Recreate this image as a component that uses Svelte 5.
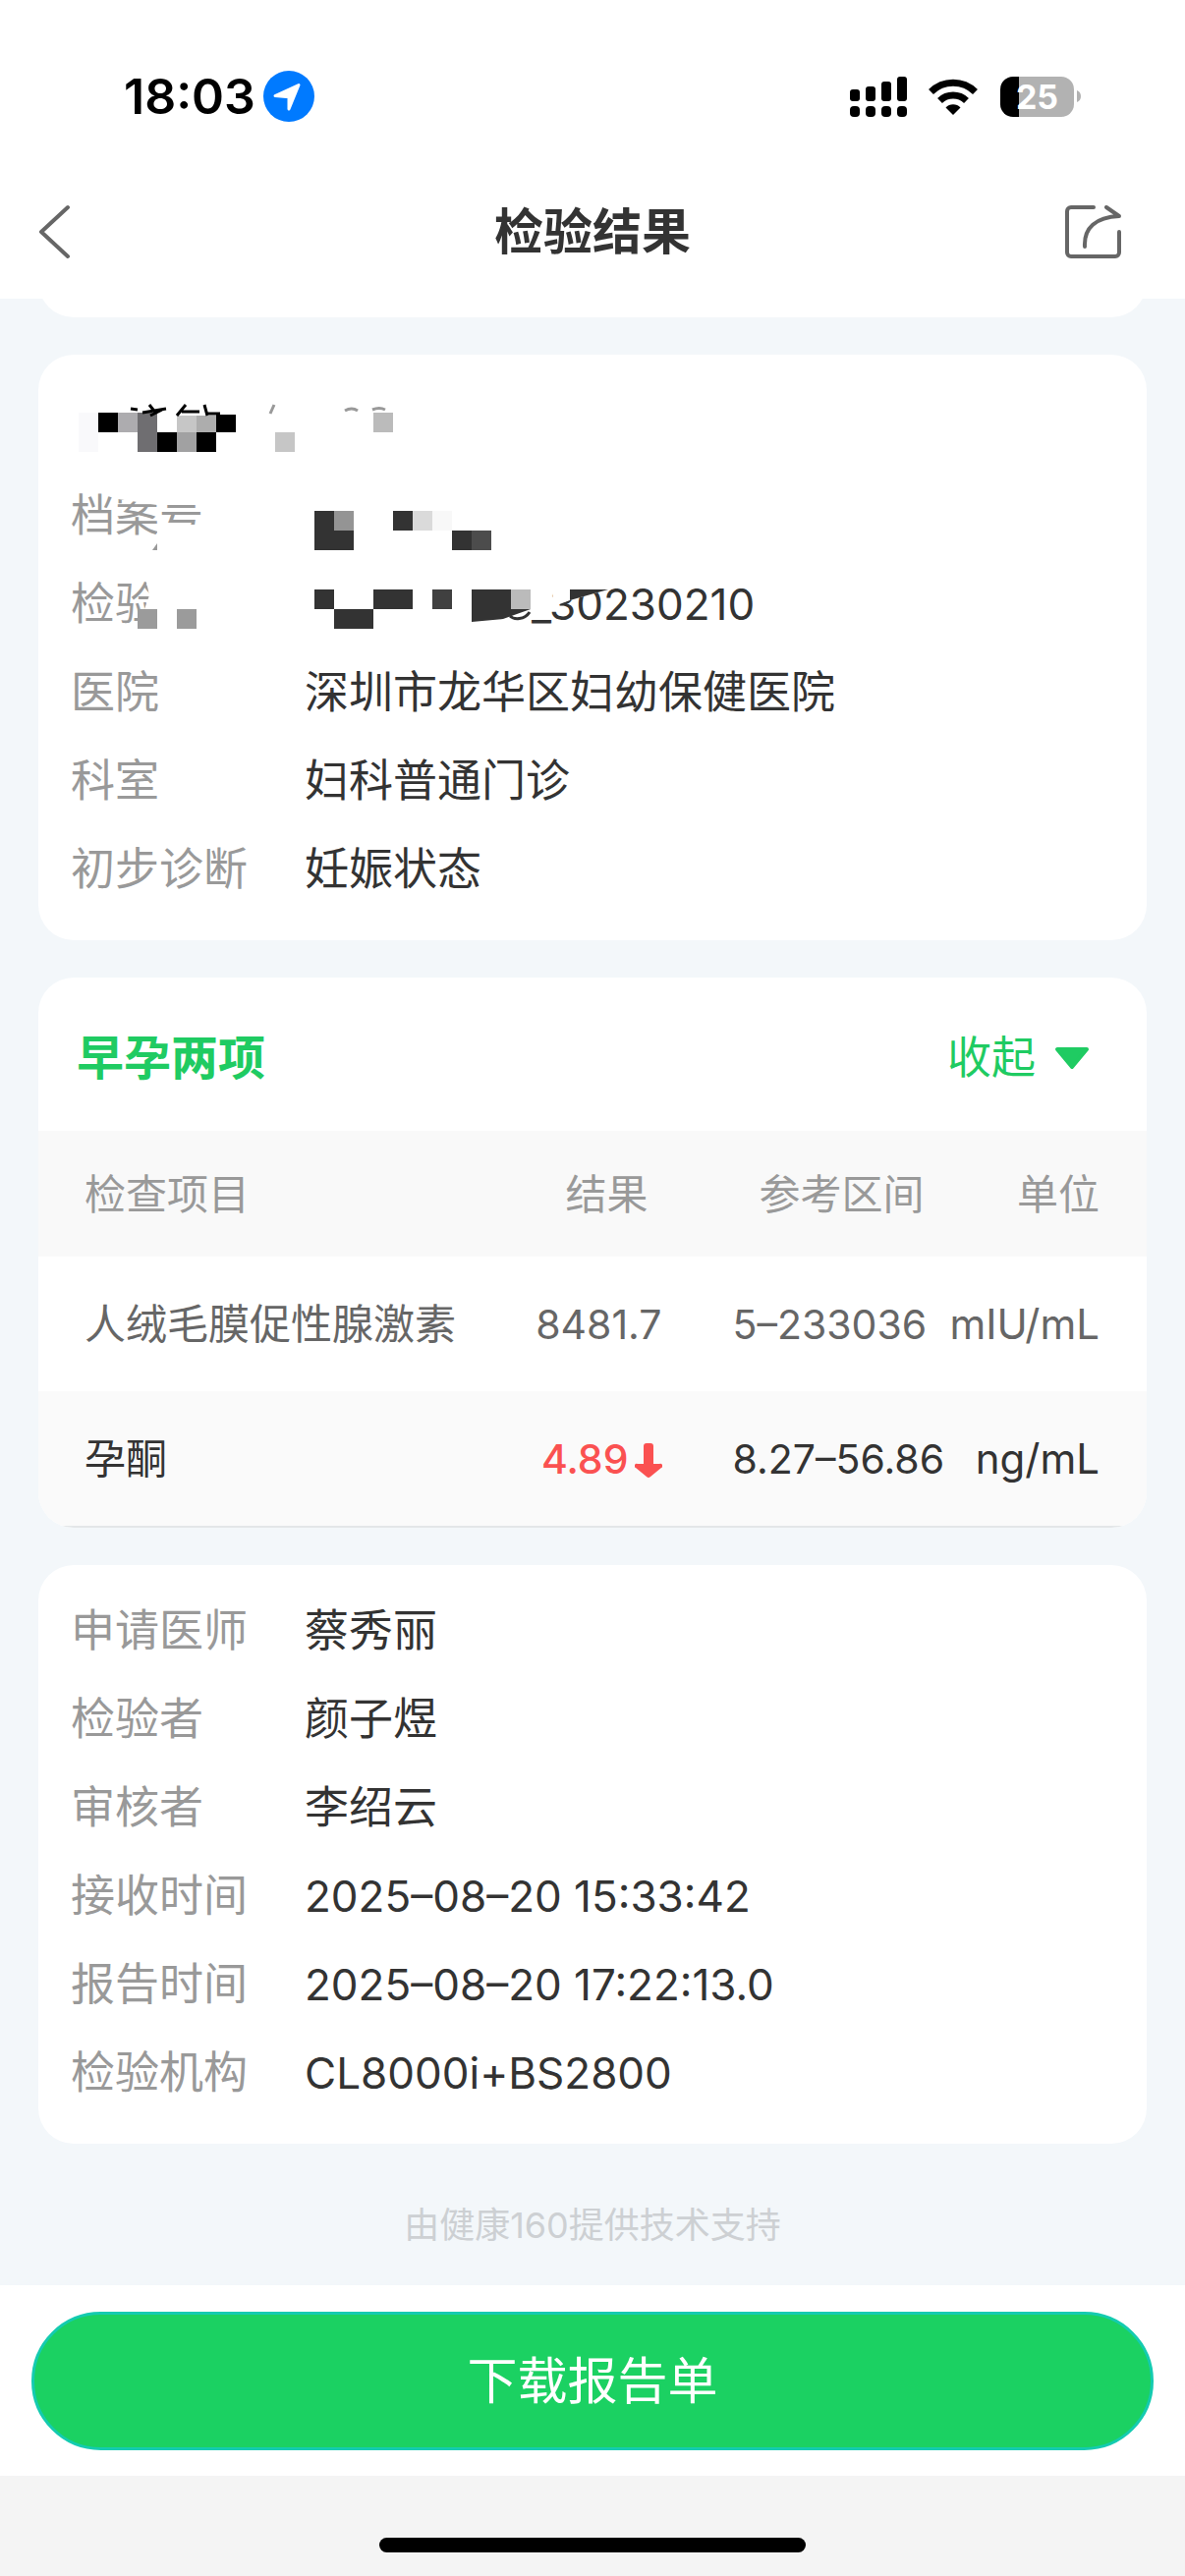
<script>
    const patient = [
        { label: '医院', value: '深圳市龙华区妇幼保健医院' },
        { label: '科室', value: '妇科普通门诊' },
        { label: '初步诊断', value: '妊娠状态' }
    ];

    const results = [
        { name: '人绒毛膜促性腺激素', value: '8481.7', range: '5–233036', unit: 'mIU/mL', low: false },
        { name: '孕酮', value: '4.89', range: '8.27–56.86', unit: 'ng/mL', low: true }
    ];

    const report = [
        { label: '申请医师', value: '蔡秀丽' },
        { label: '检验者', value: '颜子煜' },
        { label: '审核者', value: '李绍云' },
        { label: '接收时间', value: '2025–08–20 15:33:42', latin: true },
        { label: '报告时间', value: '2025–08–20 17:22:13.0', latin: true },
        { label: '检验机构', value: 'CL8000i+BS2800', latin: true }
    ];

    // mosaic tiles over the private fields: x, y, w, h, fill
    const tiles = [
        [80, 420, 20, 40, '#f9f9fb'],
        [100, 420, 20, 20, '#000'],
        [120, 420, 20, 20, '#adacaf'],
        [140, 420, 20, 40, '#6f6e71'],
        [180, 423, 20, 17, '#c6c6c6'],
        [200, 423, 20, 17, '#adadad'],
        [220, 422, 20, 18, '#000'],
        [160, 440, 20, 20, '#000'],
        [180, 440, 20, 20, '#a1a1a2'],
        [200, 440, 20, 20, '#000'],
        [280, 440, 20, 20, '#c6c6c6'],
        [380, 420, 20, 20, '#bbb'],
        [320, 520, 20, 20, '#333'],
        [340, 520, 20, 20, '#949494'],
        [320, 540, 40, 20, '#333'],
        [400, 520, 20, 20, '#333'],
        [420, 520, 20, 20, '#dadada'],
        [440, 520, 20, 20, '#f8f8f8'],
        [460, 540, 20, 20, '#333'],
        [480, 540, 20, 20, '#4c4c4c'],
        [140, 620, 20, 20, '#9b9b9b'],
        [180, 620, 20, 20, '#9b9b9b'],
        [320, 600, 20, 20, '#333'],
        [340, 620, 40, 20, '#333'],
        [380, 600, 40, 20, '#333'],
        [440, 600, 20, 20, '#404040'],
        [520, 600, 20, 20, '#bbb']
    ];

    let open = $state(true);
</script>

<div class="page">
    <div class="status">
        <span class="time">18:03</span>
        <svg class="location" viewBox="0 0 52 52" aria-hidden="true">
            <circle cx="26" cy="26" r="26" fill="#007aff" />
            <path d="M12 25.5 36 14.5 26 39V26.800Z" fill="#fff" stroke="#fff" stroke-width="3" stroke-linejoin="round" />
        </svg>
        <span class="spacer"></span>
        <svg class="signal" viewBox="0 0 58 41" aria-hidden="true">
            <rect x="0" y="13" width="10" height="12" rx="3" />
            <rect x="16" y="10" width="10" height="15" rx="3" />
            <rect x="32" y="5" width="10" height="20" rx="3" />
            <rect x="48" y="0" width="10" height="25" rx="3" />
            <rect x="0" y="30" width="10" height="11" rx="4" />
            <rect x="16" y="30" width="10" height="11" rx="4" />
            <rect x="32" y="30" width="10" height="11" rx="4" />
            <rect x="48" y="30" width="10" height="11" rx="4" />
        </svg>
        <svg class="wifi" viewBox="0 0 50 37" aria-hidden="true">
            <path d="M2.500 13.500a32 32 0 0 1 45 0" fill="none" stroke="#000" stroke-width="7" />
            <path d="M11.500 22.500a19.500 19.500 0 0 1 27 0" fill="none" stroke="#000" stroke-width="7" />
            <path d="M25 37 17.500 29.500a10.500 10.500 0 0 1 15 0Z" />
        </svg>
        <div class="battery">
            <span class="cell">25</span>
            <svg viewBox="0 0 4 12" aria-hidden="true"><path d="M0 0a6.500 6.500 0 0 1 0 12Z" fill="#b2b2b2" /></svg>
        </div>
    </div>

    <header class="nav">
        <button class="icon-btn" type="button" aria-label="返回">
            <svg class="back" viewBox="0 0 34 56" aria-hidden="true">
                <path d="M31 3 4 28l27 25" />
            </svg>
        </button>
        <h1>检验结果</h1>
        <button class="icon-btn" type="button" aria-label="分享">
            <svg class="share" viewBox="0 0 58 54" aria-hidden="true">
                <path d="M29 2H6a4 4 0 0 0-4 4v42a4 4 0 0 0 4 4h45a4 4 0 0 0 4-4V27" />
                <path d="M20 42C19 23 31 12 55 11L42 2" />
            </svg>
        </button>
    </header>

    <main>
        <div class="card stub"></div>

        <section class="card info">
            <div class="person"></div>
            <dl>
                <div class="row"><dt>档案号</dt><dd></dd></div>
                <div class="row"><dt>检验</dt><dd class="latin masked">_30230210</dd></div>
                {#each patient as item}
                    <div class="row"><dt>{item.label}</dt><dd>{item.value}</dd></div>
                {/each}
            </dl>
            <svg class="mosaic" viewBox="39 361 760 290" aria-hidden="true">
                <g fill="#fff">
                    <path d="M117 495h93v19h-50l-40-6Z" />
                    <path d="M160 534h50v20h-50Z" />
                    <path d="M148 588h20v52h-28v-20h7l5-14Z" />
                    <path d="M560 590h59v10l-39 11-16 6Z" />
                </g>
                {#each tiles as [x, y, w, h, fill]}
                    <rect {x} {y} width={w} height={h} {fill} />
                {/each}
                <path d="M480 600h40v20h20l-28 10-32 3Z" fill="#333" />
                <path d="M580 600h39l-39 11Z" fill="#333" />
                <path d="M155 560l5-7v7Z" fill="#999" />
                <path d="M519 627c4 4 15 4 20-4" fill="none" stroke="#333" stroke-width="3" />
                <g fill="none" stroke="#000" stroke-width="3">
                    <path d="M133 416l7 1M152 412l7 9M145 420l24-4M165 417l-12 6" />
                    <path d="M189 412l-9 11M185 419h18M208 412l3 11M211 421h13" />
                </g>
                <g fill="none" stroke="#999" stroke-width="3">
                    <path d="M279 412l-4 9M351 418q7-4 13 0M379 417q7-3 13 0" />
                </g>
            </svg>
        </section>

        <section class="card panel">
            <div class="panel-head">
                <h2>早孕两项</h2>
                <button type="button" class="toggle" aria-expanded={open} onclick={() => (open = !open)}>
                    {open ? '收起' : '展开'}
                    <svg viewBox="0 0 36 24" aria-hidden="true"><path d="M3 3h30L18 21Z" /></svg>
                </button>
            </div>
            {#if open}
                <table>
                    <colgroup>
                        <col class="c-name" />
                        <col class="c-value" />
                        <col class="c-range" />
                        <col class="c-unit" />
                    </colgroup>
                    <thead>
                        <tr>
                            <th class="name">检查项目</th>
                            <th class="value">结果</th>
                            <th class="range">参考区间</th>
                            <th class="unit">单位</th>
                        </tr>
                    </thead>
                    <tbody>
                        {#each results as item}
                            <tr class:low={item.low}>
                                <td class="name">{item.name}</td>
                                <td class="value">
                                    {item.value}{#if item.low}<svg viewBox="0 0 28 36" aria-label="偏低"><path d="M9 4a3 3 0 0 1 3-3h4a3 3 0 0 1 3 3v18h6a2 2 0 0 1 2 4L16 35a3 3 0 0 1-4 0L1 26a2 2 0 0 1 2-4h6Z" /></svg>{/if}
                                </td>
                                <td class="range">{item.range}</td>
                                <td class="unit">{item.unit}</td>
                            </tr>
                        {/each}
                    </tbody>
                </table>
            {/if}
        </section>

        <section class="card info">
            <dl>
                {#each report as item}
                    <div class="row"><dt>{item.label}</dt><dd class:latin={item.latin}>{item.value}</dd></div>
                {/each}
            </dl>
        </section>

        <p class="support">由健康160提供技术支持</p>
    </main>

    <div class="actions">
        <button type="button" class="download">下载报告单</button>
    </div>
    <div class="home"><span></span></div>
</div>

<style>
    :global(body) {
        margin: 0;
        background: #f3f7fa;
    }

    .page {
        min-height: 100vh;
        display: flex;
        flex-direction: column;
        color: #333;
        font-family: Inter, "Noto Sans CJK SC", sans-serif;
        font-size: 45px;
    }

    button {
        border: none;
        background: none;
        padding: 0;
        margin: 0;
        font-family: inherit;
        cursor: pointer;
    }

    svg {
        display: block;
        flex: none;
    }

    h1,
    h2,
    p,
    dl,
    dd {
        margin: 0;
    }

    /* status bar */
    .status {
        display: flex;
        align-items: center;
        padding: 72px 106px 44px 126px;
        background: #fff;
        color: #000;
    }

    .time {
        font-size: 50px;
        line-height: 52px;
        font-weight: 600;
    }

    .location {
        width: 52px;
        height: 52px;
        margin-left: 8px;
    }

    .spacer {
        flex: 1;
    }

    .signal {
        width: 58px;
        height: 41px;
    }

    .wifi {
        width: 50px;
        height: 37px;
        margin: 0 23px 0 22px;
    }

    .battery {
        display: flex;
        align-items: center;
        gap: 3px;

        .cell {
            width: 75px;
            line-height: 41px;
            border-radius: 13px;
            background: linear-gradient(to right, #000 25%, #b2b2b2 25%);
            color: #fff;
            font-size: 34px;
            font-weight: 700;
            text-align: center;
        }

        svg {
            width: 4px;
            height: 12px;
        }
    }

    /* title bar */
    .nav {
        display: grid;
        grid-template-columns: 1fr auto 1fr;
        align-items: center;
        height: 136px;
        padding: 0 64px 0 38px;
        background: #fff;

        h1 {
            /* evens out the wider right padding of the bar */
            padding-left: 26px;
            font-size: 50px;
            font-weight: 600;
            line-height: 72px;
        }
    }

    .icon-btn {
        justify-self: start;

        svg {
            fill: none;
            stroke: #666;
            stroke-width: 4;
            stroke-linecap: round;
            stroke-linejoin: round;
        }
    }

    h1 + .icon-btn {
        justify-self: end;
    }

    .back {
        width: 34px;
        height: 56px;
    }

    .share {
        width: 58px;
        height: 54px;
    }

    main {
        flex: 1;
        display: flex;
        flex-direction: column;
        gap: 38px;
        padding: 0 39px;
        background: #f3f7fa;
        overflow: hidden;
    }

    .card {
        border-radius: 36px;
        background: #fff;
        overflow: hidden;
    }

    /* end of the card that is scrolled away under the title bar */
    .stub {
        flex: none;
        height: 80px;
        margin-top: -61px;
    }

    .info {
        position: relative;
        padding: 22px 33px 27px;
    }

    .person {
        height: 97px;
    }

    .row {
        display: flex;
        line-height: 90px;

        dt {
            width: 238px;
            color: #999;
        }

        dd {
            flex: 1;
        }

        .latin {
            font-size: 44px;
        }

        .masked {
            padding-left: 231px;
        }
    }

    .mosaic {
        position: absolute;
        top: 0;
        left: 0;
        width: 760px;
        height: 290px;
    }

    /* result table */
    .panel-head {
        display: flex;
        align-items: center;
        justify-content: space-between;
        padding: 46px 58px 38px 39px;
        line-height: 72px;

        h2 {
            color: #1fcb62;
            font-size: 48px;
            font-weight: 600;
        }
    }

    .toggle {
        display: flex;
        align-items: center;
        gap: 19px;
        color: #1fcb62;
        font-size: 45px;
        line-height: 60px;

        svg {
            width: 36px;
            height: 24px;
            fill: #1fcb62;
            stroke: #1fcb62;
            stroke-width: 4;
            stroke-linejoin: round;
        }
    }

    table {
        width: 100%;
        table-layout: fixed;
        border-collapse: collapse;
        font-size: 42px;
        line-height: 60px;
        color: #666;
        border-bottom: 2px solid #e3e6e8;
    }

    .c-name {
        width: 40%;
    }

    .c-value {
        width: 19%;
    }

    .c-range {
        width: 23%;
    }

    .c-unit {
        width: 18%;
    }

    th,
    td {
        padding: 39px 0 38px;
        font-weight: 400;
        text-align: left;
        white-space: nowrap;
    }

    th {
        padding: 35px 0 33px;
        color: #999;
        background: #f9f9f9;
    }

    .name {
        padding-left: 47px;
    }

    .value {
        padding-right: 31px;
        text-align: right;
    }

    .range {
        padding-left: 41px;
    }

    .unit {
        padding-right: 48px;
        text-align: right;
    }

    td.value,
    td.range {
        font-size: 41px;
    }

    th.value {
        padding-right: 45px;
    }

    th.range {
        padding-left: 68px;
    }

    .low {
        background: #fafafa;
        color: #333;

        .value {
            color: #fa5151;
            font-weight: 500;
        }

        svg {
            display: inline-block;
            width: 28px;
            height: 36px;
            margin-left: 6px;
            vertical-align: -4px;
            fill: #fa5151;
        }
    }

    .support {
        padding: 21px 0 37px;
        text-align: center;
        font-size: 36px;
        line-height: 48px;
        color: #cdd0d3;
    }

    .actions {
        padding: 27px 32px 26px;
        background: #fff;
    }

    .download {
        width: 100%;
        height: 141px;
        border: 3px solid #14cbb0;
        border-radius: 71px;
        background: #1bd162;
        color: #fff;
        font-size: 51px;
        line-height: 72px;
    }

    .home {
        display: flex;
        justify-content: center;
        padding: 63px 0 24px;
        background: #f4f4f4;

        span {
            width: 36%;
            height: 15px;
            border-radius: 8px;
            background: #000;
        }
    }
</style>
